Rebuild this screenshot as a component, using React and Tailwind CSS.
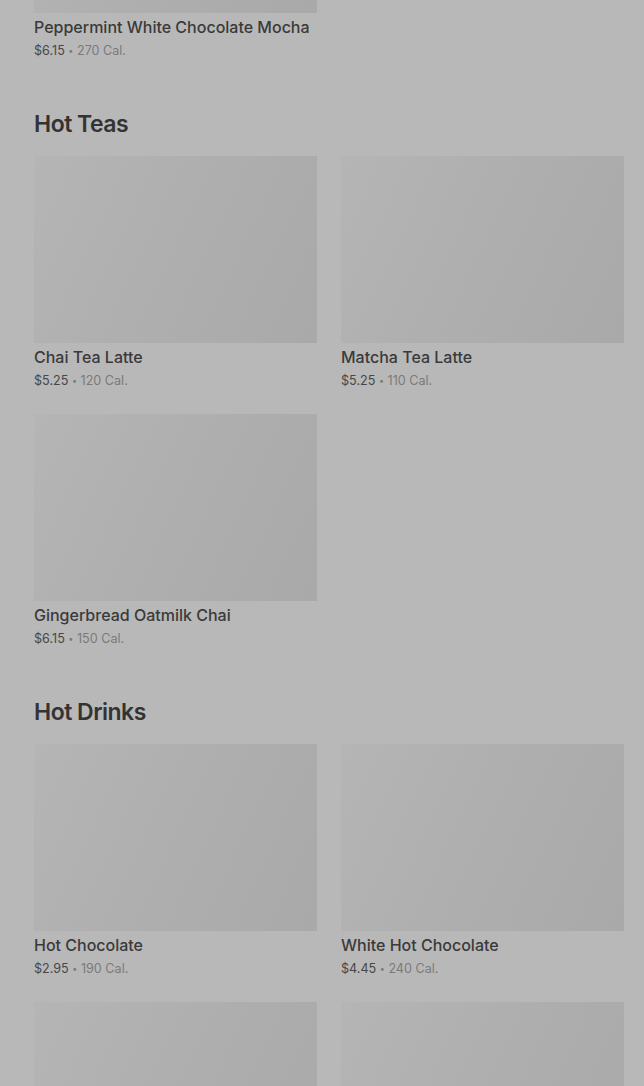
const sections = [
  {
    title: null,
    items: [{ name: 'Peppermint White Chocolate Mocha', price: '$6.15', cal: '270 Cal.' }],
  },
  {
    title: 'Hot Teas',
    items: [
      { name: 'Chai Tea Latte', price: '$5.25', cal: '120 Cal.' },
      { name: 'Matcha Tea Latte', price: '$5.25', cal: '110 Cal.' },
      { name: 'Gingerbread Oatmilk Chai', price: '$6.15', cal: '150 Cal.' },
    ],
  },
  {
    title: 'Hot Drinks',
    items: [
      { name: 'Hot Chocolate', price: '$2.95', cal: '190 Cal.' },
      { name: 'White Hot Chocolate', price: '$4.45', cal: '240 Cal.' },
      { name: 'Steamed Milk', price: '$2.45', cal: '200 Cal.' },
      { name: 'Vanilla Crème', price: '$3.95', cal: '250 Cal.' },
    ],
  },
]

function ProductCard({ name, price, cal }) {
  return (
    <div className="flex flex-col">
      <div className="h-[187px] w-full bg-[linear-gradient(115deg,#b5b5b5_0%,#afafaf_45%,#a9a9a9_100%)]" />
      <p className="mt-[2px] text-[16px] leading-[24px] font-medium text-[#3a3a3a]">{name}</p>
      <p className="h-[22px] pt-[1px] text-[12.6px] leading-[21px] text-[#7a7a7a]">
        <span className="text-[#474747]">{price}</span>{' '}
        <span className="relative -top-[1px] text-[9px] leading-none">•</span> {cal}
      </p>
    </div>
  )
}

export default function App() {
  return (
    <div className="h-[1086px] overflow-hidden bg-[#b8b8b8] pl-[34px] pr-[20px] font-['Inter',sans-serif]">
      <div className="-mt-[174px]">
        {sections.map((s, i) => (
          <section key={i} className="pb-[45px]">
            {s.title && (
              <h2 className="mb-[14px] text-[23px] leading-[36px] font-semibold tracking-[-0.5px] text-[#333333]">
                {s.title}
              </h2>
            )}
            <div className="grid grid-cols-2 gap-x-[24px] gap-y-[23px]">
              {s.items.map((it) => (
                <ProductCard key={it.name} {...it} />
              ))}
            </div>
          </section>
        ))}
      </div>
    </div>
  )
}
